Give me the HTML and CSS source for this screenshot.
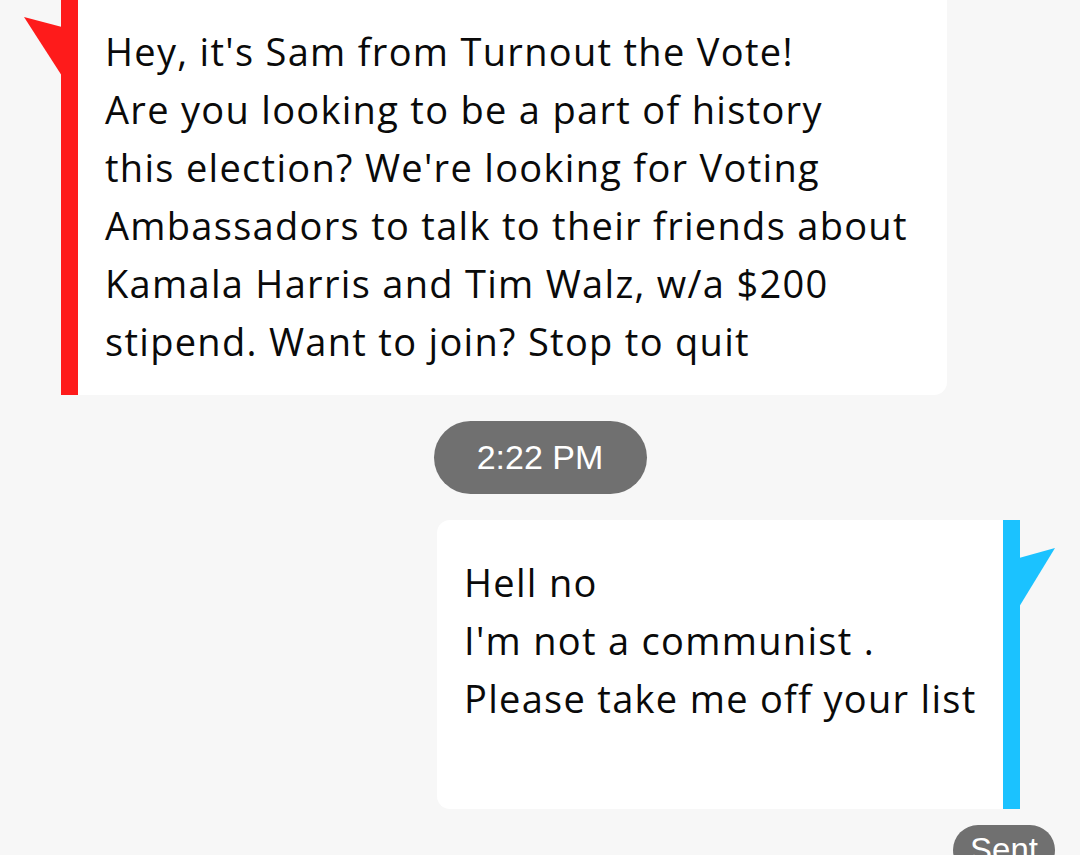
FILE: index.html
```html
<!DOCTYPE html>
<html lang="en">
<head>
<meta charset="utf-8">
<title>Conversation</title>
<link rel="stylesheet" href="styles.css">
</head>
<body>
<main class="chat">
  <div class="msg msg-in">
    <svg class="tail tail-in" width="38" height="60" viewBox="0 0 38 60" aria-hidden="true"><polygon points="0,0 38,10 38,59" fill="#fe1b1b"/></svg>
    <div class="bar bar-red"></div>
    <div class="body body-in">Hey, it's Sam from Turnout the Vote!<br>Are you looking to be a part of history<br>this election? We're looking for Voting<br>Ambassadors to talk to their friends about<br>Kamala Harris and Tim Walz, w/a $200<br>stipend. Want to join? Stop to quit</div>
  </div>
  <div class="pill time">2:22 PM</div>
  <div class="msg msg-out">
    <div class="body body-out">Hell no<br>I'm not a communist .<br>Please take me off your list</div>
    <div class="bar bar-blue"></div>
    <svg class="tail tail-out" width="37" height="60" viewBox="0 0 37 60" aria-hidden="true"><polygon points="0,10 36,0 0,59" fill="#1bc2ff"/></svg>
  </div>
  <div class="pill sent">Sent</div>
</main>
</body>
</html>
```
FILE: styles.css
```css
html, body {
  margin: 0;
  padding: 0;
  background: #f7f7f7;
}
body {
  width: 1080px;
  height: 855px;
  overflow: hidden;
}
.chat {
  display: flex;
  flex-direction: column;
}
.msg {
  position: relative;
  display: flex;
}
.msg-in {
  align-self: flex-start;
  margin-left: 61px;
  margin-top: -12px;
  width: 886px;
}
.msg-out {
  align-self: flex-end;
  margin-right: 60px;
  margin-top: 26px;
  width: 583px;
}
.bar {
  width: 17px;
  flex: none;
}
.bar-red { background: #fe1b1b; }
.bar-blue { background: #1bc2ff; }
.body {
  flex: 1;
  background: #ffffff;
  color: #0a0a0a;
  font-family: "Open Sans", "Noto Sans", sans-serif;
  font-size: 38px;
  font-weight: 500;
  line-height: 58px;
  letter-spacing: 1.3px;
  white-space: nowrap;
}
.body-in {
  padding: 34px 0 25px 27px;
  border-radius: 0 13px 13px 0;
}
.body-out {
  padding: 33px 0 82px 27px;
  border-radius: 13px 0 0 13px;
}
.tail {
  position: absolute;
  display: block;
}
.tail-in {
  left: -37px;
  top: 29px;
}
.tail-out {
  right: -36px;
  top: 28px;
}
.pill {
  background: #707070;
  color: #ffffff;
  font-family: "Liberation Sans", Arial, sans-serif;
  display: flex;
  align-items: center;
  justify-content: center;
}
.time {
  align-self: center;
  margin-top: 26px;
  width: 213px;
  height: 73px;
  border-radius: 37px;
  font-size: 34px;
}
.sent {
  align-self: flex-end;
  margin-right: 25px;
  margin-top: 16px;
  width: 102px;
  height: 50px;
  border-radius: 25px;
  font-size: 33px;
}
```
